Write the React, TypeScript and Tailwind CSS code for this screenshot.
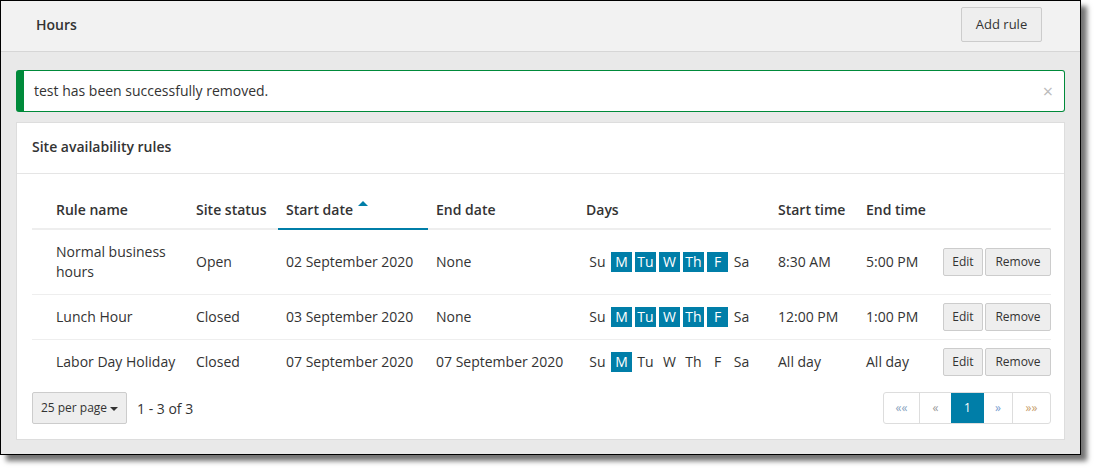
import React from "react";

type Rule = {
  name: string;
  status: string;
  start: string;
  end: string;
  days: boolean[];
  from: string;
  to: string;
  tall?: boolean;
};

const DAY_LABELS = ["Su", "M", "Tu", "W", "Th", "F", "Sa"];

const rules: Rule[] = [
  {
    name: "Normal business hours",
    status: "Open",
    start: "02 September 2020",
    end: "None",
    days: [false, true, true, true, true, true, false],
    from: "8:30 AM",
    to: "5:00 PM",
    tall: true,
  },
  {
    name: "Lunch Hour",
    status: "Closed",
    start: "03 September 2020",
    end: "None",
    days: [false, true, true, true, true, true, false],
    from: "12:00 PM",
    to: "1:00 PM",
  },
  {
    name: "Labor Day Holiday",
    status: "Closed",
    start: "07 September 2020",
    end: "07 September 2020",
    days: [false, true, false, false, false, false, false],
    from: "All day",
    to: "All day",
  },
];

function Days({ days }: { days: boolean[] }) {
  return (
    <div className="flex gap-[3px]">
      {DAY_LABELS.map((d, i) => (
        <span
          key={d}
          className={
            days[i]
              ? "flex h-[20px] w-[21px] items-center justify-center bg-[#007ea8] text-white"
              : "flex h-[20px] w-[21px] items-center justify-center"
          }
        >
          {d}
        </span>
      ))}
    </div>
  );
}

export default function App() {
  return (
    <div
      className="h-[470px] w-[1097px] bg-white text-[14px] text-[#333]"
      style={{ fontFamily: '"Open Sans", "Liberation Sans", sans-serif' }}
    >
      <div className="flex h-[455px] w-[1081px] flex-col border border-black bg-[#e9e9e9] shadow-[6px_6px_5px_rgba(0,0,0,0.55)]">
        {/* page header */}
        <div className="flex h-[51px] shrink-0 items-center justify-between border-b border-[#d6d6d6] bg-[#f2f2f2] pb-[3px] pl-[35px] pr-[38px]">
          <span className="text-[14px] font-semibold text-[#333]">Hours</span>
          <button className="h-[35px] w-[81px] rounded-[2px] border border-[#cccccc] bg-[#eeeeee] text-[13px] text-[#333]">
            Add rule
          </button>
        </div>

        <div className="flex flex-col px-[15px] pt-[18px]">
          {/* alert */}
          <div className="flex h-[42px] items-center justify-between rounded-[3px] border border-l-[8px] border-[#008a3a] bg-white pb-[1px] pl-[10px] pr-[11px]">
            <span>test has been successfully removed.</span>
            <span className="text-[18px] leading-none text-[#bbbbbb]">×</span>
          </div>

          {/* card */}
          <div className="mt-[10px] border border-[#dddddd] bg-white">
            <div className="flex h-[51px] items-center border-b border-[#e5e5e5] pb-[3px] pl-[15px] font-semibold">
              Site availability rules
            </div>

            <div className="pb-[15px] pl-[15px] pr-[13px] pt-[16px]">
              <table className="w-full border-collapse text-left">
                <colgroup>
                  <col className="w-[156px]" />
                  <col className="w-[90px]" />
                  <col className="w-[150px]" />
                  <col className="w-[150px]" />
                  <col className="w-[192px]" />
                  <col className="w-[88px]" />
                  <col className="w-[77px]" />
                  <col />
                </colgroup>
                <thead>
                  <tr className="h-[39px] border-b-2 border-[#eeeeee]">
                    <th className="pl-[24px] font-semibold">Rule name</th>
                    <th className="pl-[8px] font-semibold">Site status</th>
                    <th className="relative pl-[8px] font-semibold">
                      Start date
                      <span className="absolute left-[80px] top-[11px] h-0 w-0 border-x-[5px] border-b-[5px] border-x-transparent border-b-[#007ea8]" />
                      <span className="absolute bottom-[-2px] left-0 right-0 h-[2px] bg-[#007ea8]" />
                    </th>
                    <th className="pl-[8px] font-semibold">End date</th>
                    <th className="pl-[8px] font-semibold">Days</th>
                    <th className="pl-[8px] font-semibold">Start time</th>
                    <th className="pl-[8px] font-semibold">End time</th>
                    <th />
                  </tr>
                </thead>
                <tbody>
                  {rules.map((r) => (
                    <tr
                      key={r.name}
                      className={
                        r.tall
                          ? "h-[65px] border-b border-[#eeeeee] leading-[20px]"
                          : "h-[45px] border-b border-[#eeeeee] leading-[20px] last:border-b-0"
                      }
                    >
                      <td className="pl-[24px] pr-[8px]">{r.name}</td>
                      <td className="pl-[8px]">{r.status}</td>
                      <td className="pl-[8px]">{r.start}</td>
                      <td className="pl-[8px]">{r.end}</td>
                      <td className="pl-[9px]">
                        <Days days={r.days} />
                      </td>
                      <td className="pl-[8px]">{r.from}</td>
                      <td className="pl-[8px]">{r.to}</td>
                      <td className="pl-[8px]">
                        <div className="flex justify-end gap-[2px]">
                          <button className="h-[28px] w-[40px] rounded-[2px] border border-[#cccccc] bg-[#eeeeee] text-[12px] text-[#333]">
                            Edit
                          </button>
                          <button className="h-[28px] w-[66px] rounded-[2px] border border-[#cccccc] bg-[#eeeeee] text-[12px] text-[#333]">
                            Remove
                          </button>
                        </div>
                      </td>
                    </tr>
                  ))}
                </tbody>
              </table>

              <div className="mt-[8px] flex items-center justify-between">
                <div className="flex items-center gap-[10px]">
                  <button className="flex h-[32px] w-[95px] items-center justify-center gap-[3px] rounded-[2px] border border-[#cccccc] bg-[#eeeeee] text-[12px] text-[#333]">
                    25 per page
                    <span className="mt-[1px] h-0 w-0 border-x-[4px] border-t-[4px] border-x-transparent border-t-[#333]" />
                  </button>
                  <span>1 - 3 of 3</span>
                </div>
                <div className="flex h-[32px] overflow-hidden rounded-[3px] border border-[#dddddd] text-[12px]">
                  <span className="flex w-[36px] items-center justify-center border-r border-[#dddddd] text-[#8aa4c0]">««</span>
                  <span className="flex w-[31px] items-center justify-center text-[#9a9a9a]">«</span>
                  <span className="flex w-[33px] items-center justify-center bg-[#007ea8] text-white">1</span>
                  <span className="flex w-[29px] items-center justify-center border-r border-[#dddddd] text-[#7a9ed0]">»</span>
                  <span className="flex w-[37px] items-center justify-center text-[#c8a070]">»»</span>
                </div>
              </div>
            </div>
          </div>
        </div>
      </div>
    </div>
  );
}
